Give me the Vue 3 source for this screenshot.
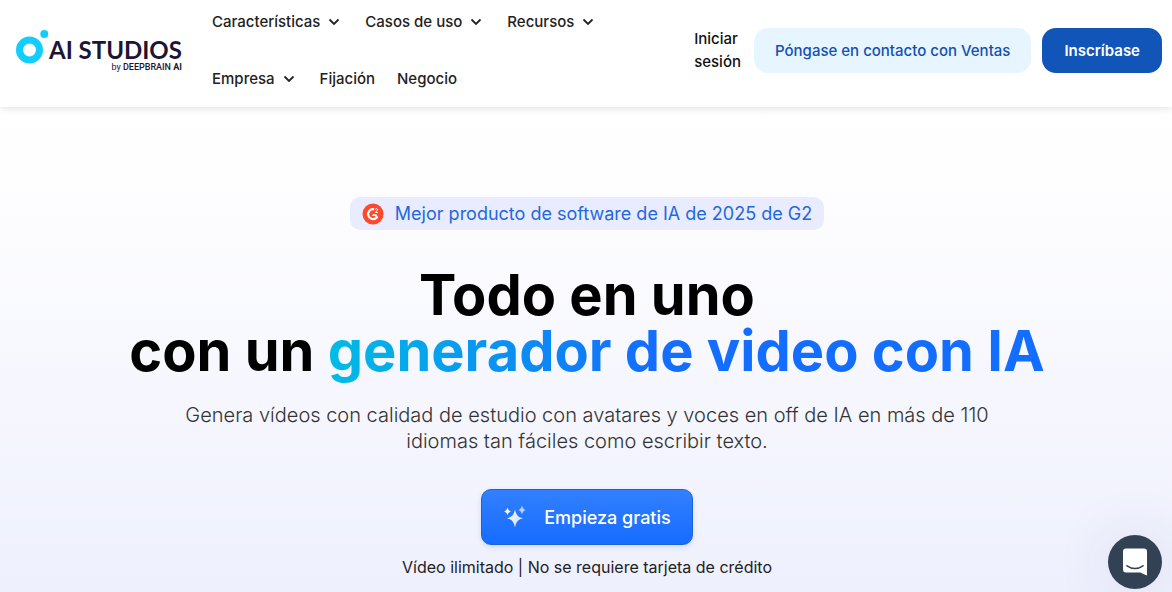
<script setup>
const menuRows = [
  [
    { label: 'Características', menu: true },
    { label: 'Casos de uso', menu: true },
    { label: 'Recursos', menu: true },
  ],
  [
    { label: 'Empresa', menu: true },
    { label: 'Fijación', menu: false },
    { label: 'Negocio', menu: false },
  ],
]
</script>

<template>
  <div class="page">
    <header class="header">
      <a class="logo" href="#" aria-label="AI Studios">
        <svg class="logo-mark" viewBox="0 0 33 36" aria-hidden="true">
          <circle cx="13.500" cy="21" r="10" fill="none" stroke="#14cdff" stroke-width="7" />
          <circle cx="28.300" cy="5" r="4" fill="#14cdff" />
        </svg>
        <span class="logo-text">
          <span class="logo-name">AI STUDIOS</span>
          <span class="logo-by">by <span class="logo-brand">DEEPBRAIN <b>AI</b></span></span>
        </span>
      </a>

      <nav class="nav">
        <div v-for="(row, i) in menuRows" :key="i" class="nav-row">
          <template v-for="item in row" :key="item.label">
            <button v-if="item.menu" type="button" class="nav-item nav-menu">
              {{ item.label }}
              <svg class="chevron" viewBox="0 0 12 12" aria-hidden="true">
                <path d="M1.500 4.500 L6 9 L10.500 4.500" fill="none" stroke="currentColor" stroke-width="1.800" />
              </svg>
            </button>
            <a v-else href="#" class="nav-item">{{ item.label }}</a>
          </template>
        </div>
      </nav>

      <div class="actions">
        <a class="login" href="#">Iniciar<br />sesión</a>
        <a class="btn sales" href="#">Póngase en contacto con Ventas</a>
        <a class="btn signup" href="#">Inscríbase</a>
      </div>
    </header>

    <main class="hero">
      <a class="award" href="#">
        <svg class="g2" viewBox="0 0 22 22" aria-hidden="true">
          <circle cx="11" cy="11" r="10.500" fill="#ff492c" />
          <path d="M12 6.300 A4.900 4.900 0 1 0 14.200 14.800" fill="none" stroke="#fff" stroke-width="2.200" />
          <path d="M10.800 11.200 H14.300 L16.200 14.500 L14.800 16.300 L12.900 13 H9.900 Z" fill="#fff" />
          <path d="M13.200 6.700 C13.400 5.300 15.700 5.300 15.600 6.800 C15.500 7.900 13.400 8.200 13.400 9.500 H15.900" fill="none" stroke="#fff" stroke-width="1" />
        </svg>
        Mejor producto de software de IA de 2025 de G2
      </a>

      <h1 class="title">Todo en uno<br />con un <span class="title-accent">generador de video con IA</span></h1>

      <p class="lead">
        Genera vídeos con calidad de estudio con avatares y voces en off de IA en más de 110 idiomas tan fáciles como escribir texto.
      </p>

      <button type="button" class="cta">
        <svg class="sparkles" viewBox="0 0 24 24" aria-hidden="true">
          <defs>
            <linearGradient id="spark" x1="0" y1="0" x2="1" y2="1">
              <stop offset="0" stop-color="#fff" />
              <stop offset="1" stop-color="#c3dafe" />
            </linearGradient>
          </defs>
          <path d="M12 4.500 C13.300 10 14.800 12 20 13.300 C14.800 14.800 13.300 16.800 12 22.500 C10.700 16.800 9.200 14.800 4 13.300 C9.200 12 10.700 10 12 4.500 Z" fill="url(#spark)" />
          <path d="M4.500 2.500 C5.200 5 5.900 5.700 8 6.400 C5.900 7.100 5.200 7.800 4.500 10.300 C3.800 7.800 3.100 7.100 1 6.400 C3.100 5.700 3.800 5 4.500 2.500 Z" fill="#fff" />
          <path d="M19 .500 C19.800 3.300 20.500 4.300 23 5 C20.500 5.700 19.800 6.700 19 9.500 C18.200 6.700 17.500 5.700 15 5 C17.500 4.300 18.200 3.300 19 .500 Z" fill="#b5d0ff" />
        </svg>
        Empieza gratis
      </button>

      <p class="note">Vídeo ilimitado | No se requiere tarjeta de crédito</p>
    </main>

    <button type="button" class="chat" aria-label="Chat">
      <svg class="chat-icon" viewBox="0 0 24 28" aria-hidden="true">
        <path d="M3 .500 H21 Q24 .500 24 3.500 V27.500 Q20 26.200 17.500 24.500 H3 Q0 24.500 0 21.500 V3.500 Q0 .500 3 .500 Z" fill="#fff" />
        <path d="M4 17.800 Q12 23.200 20 17.800" fill="none" stroke="#334155" stroke-width="1.600" stroke-linecap="round" />
      </svg>
    </button>
  </div>
</template>

<style>
body {
  margin: 0;
}
</style>

<style scoped>
.page {
  min-height: 100vh;
  display: flex;
  flex-direction: column;
  background: #fff;
  font-family: Inter, "Liberation Sans", sans-serif;
  color: #222;
}
a {
  color: inherit;
  text-decoration: none;
}
button {
  font: inherit;
  border: 0;
  cursor: pointer;
}
.header {
  position: relative;
  display: flex;
  align-items: flex-start;
  padding: 0 10px 8px 16px;
  background: #fff;
  box-shadow: 0 1px 8px rgba(0, 0, 0, 0.13);
}
.logo {
  display: flex;
  flex: none;
  width: 185px;
  padding-top: 29px;
}
.logo-mark {
  width: 33px;
  height: 36px;
}
.logo-text {
  display: flex;
  flex-direction: column;
  padding-top: 8px;
  color: #1c1535;
  font-family: Lato, sans-serif;
}
.logo-name {
  font-size: 24px;
  font-weight: 700;
  line-height: 26px;
  white-space: nowrap;
}
.logo-by {
  font: 9px/9px Roboto, sans-serif;
  text-align: right;
}
.logo-brand {
  font-weight: 500;
}
.nav {
  display: flex;
  flex: 1;
  flex-direction: column;
  gap: 15px;
}
.nav-row {
  display: flex;
}
.nav-item {
  display: flex;
  align-items: center;
  gap: 8px;
  height: 42px;
  padding: 0 11px;
  background: none;
  color: #222;
  font-size: 15px;
  font-weight: 500;
  white-space: nowrap;
}
.nav-menu {
  padding-right: 14px;
}
.chevron {
  width: 12px;
  height: 12px;
}
.actions {
  display: flex;
  align-items: center;
  padding-top: 27px;
  font-size: 15px;
  font-weight: 500;
}
.login {
  margin-right: 13px;
  line-height: 23px;
  color: #111;
}
.btn {
  display: flex;
  align-items: center;
  justify-content: center;
  box-sizing: border-box;
  height: 45px;
  padding: 0 21px;
  border-radius: 14px;
  white-space: nowrap;
}
.sales {
  margin-right: 11px;
  background: #e6f5ff;
  color: #1450b0;
}
.signup {
  padding: 0 22px;
  background: #1155b8;
  color: #fff;
  font-weight: 600;
}
.hero {
  display: flex;
  flex: 1;
  flex-direction: column;
  align-items: center;
  padding: 90px 0 14px 2px;
  background: linear-gradient(#fff, #fdfdff 20%, #eef0fd);
  text-align: center;
}
.award {
  display: flex;
  align-items: center;
  gap: 11px;
  height: 33px;
  padding: 0 12px;
  border-radius: 10px;
  background: #e8ecfe;
  color: #1f68e0;
  font-size: 18px;
}
.g2 {
  width: 22px;
  height: 22px;
}
.title {
  margin: 37px 0 0;
  color: #000;
  font-size: 56px;
  font-weight: 700;
  line-height: 56px;
}
.title-accent {
  background: linear-gradient(90deg, #00bce4, #136dff 45%);
  -webkit-background-clip: text;
  background-clip: text;
  color: transparent;
}
.lead {
  max-width: 840px;
  margin: 23px 0 0;
  color: #333;
  font-size: 20px;
  font-weight: 300;
  line-height: 26px;
}
.cta {
  display: flex;
  align-items: center;
  gap: 17px;
  height: 56px;
  margin-top: 35px;
  padding: 0 21px;
  border: 1px solid #1b63d8;
  border-radius: 10px;
  background: linear-gradient(#3380ff, #156cff);
  box-shadow: 0 2px 5px rgba(20, 80, 180, 0.15);
  color: #fff;
  font-size: 18px;
  font-weight: 500;
}
.sparkles {
  width: 24px;
  height: 24px;
}
.note {
  margin: 12px 0 0;
  color: #222;
  font-size: 16px;
  line-height: 20px;
}
.chat {
  position: fixed;
  right: 10px;
  bottom: 3px;
  display: flex;
  align-items: center;
  justify-content: center;
  width: 54px;
  height: 54px;
  padding: 0;
  border-radius: 50%;
  background: #334155;
  box-shadow: 0 0 60px rgba(50, 60, 140, 0.12);
}
.chat-icon {
  width: 24px;
  height: 28px;
}
</style>
